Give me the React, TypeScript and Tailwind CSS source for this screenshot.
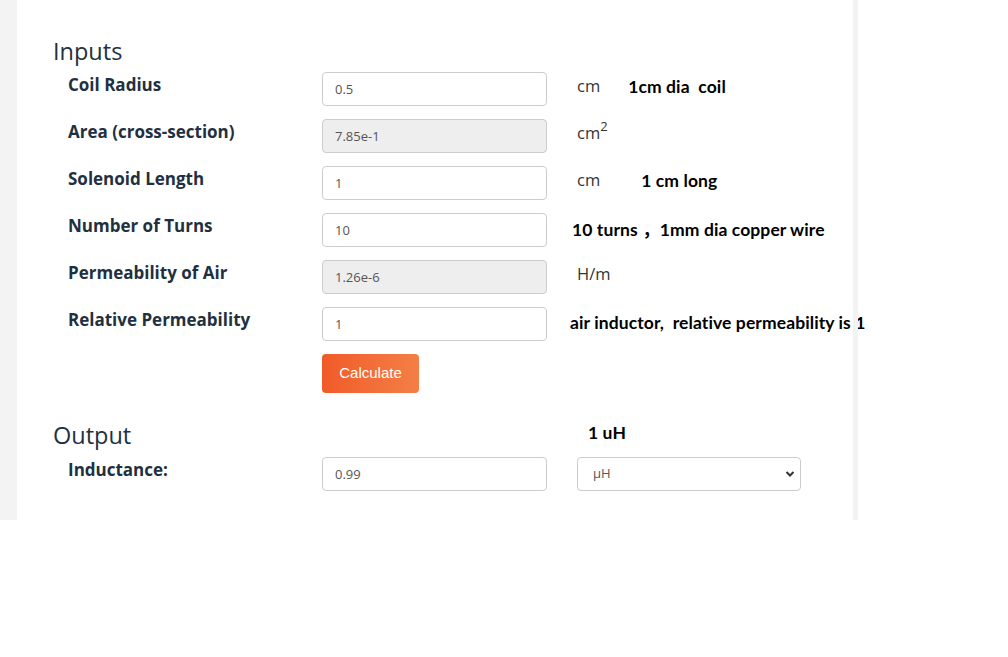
import React from "react";

const labelCls =
  "font-['Open_Sans',sans-serif] font-bold text-[17px] leading-[22px] text-[#1f3040] pl-[15px] pt-[2px]";
const inputCls =
  "w-[225px] h-[34px] rounded-[4px] border border-[#cccccc] px-[12px] text-[13px] text-[#555555] font-['Open_Sans',sans-serif] outline-none";
const unitCls =
  "font-['Open_Sans',sans-serif] text-[16.5px] leading-[22px] text-[#333333]";
const noteCls =
  "font-['Lato','Noto_Sans_CJK_SC',sans-serif] font-bold text-[17.5px] leading-[22px] text-black tracking-[0.1px]";

function Row({
  label,
  value,
  disabled,
  right,
}: {
  label: string;
  value: string;
  disabled?: boolean;
  right?: React.ReactNode;
}) {
  return (
    <div className="grid grid-cols-[269px_225px_1fr] items-start">
      <div className={labelCls}>{label}</div>
      <input
        className={inputCls + (disabled ? " bg-[#eeeeee]" : " bg-white")}
        defaultValue={value}
        disabled={disabled}
      />
      <div className="pl-[30px] pt-[3px] flex items-start whitespace-nowrap">{right}</div>
    </div>
  );
}

export default function App() {
  return (
    <div className="w-[1008px] h-[657px] bg-white">
      <div className="flex h-[520px]">
        <div className="w-[17px] bg-[#f3f3f3]" />
        <div className="w-[836px] bg-white pl-[36px] pt-[36px]">
          <h2 className="font-['Open_Sans',sans-serif] text-[23.5px] leading-[30px] text-[#22313f] mb-[6px]">
            Inputs
          </h2>
          <div className="flex flex-col gap-[13px]">
            <Row
              label="Coil Radius"
              value="0.5"
              right={
                <>
                  <span className={unitCls}>cm</span>
                  <span className={noteCls + " ml-[28px] mt-[1px]"}>1cm dia&nbsp; coil</span>
                </>
              }
            />
            <Row
              label="Area (cross-section)"
              value="7.85e-1"
              disabled
              right={
                <span className={unitCls}>
                  cm<sup className="text-[13px] relative top-[-8px]">2</sup>
                </span>
              }
            />
            <Row
              label="Solenoid Length"
              value="1"
              right={
                <>
                  <span className={unitCls}>cm</span>
                  <span className={noteCls + " ml-[41px] mt-[1px]"}>1 cm long</span>
                </>
              }
            />
            <Row
              label="Number of Turns"
              value="10"
              right={
                <span className={noteCls + " ml-[-5px] mt-[3px]"}>10 turns ，1mm dia copper wire</span>
              }
            />
            <Row
              label="Permeability of Air"
              value="1.26e-6"
              disabled
              right={<span className={unitCls}>H/m</span>}
            />
            <Row
              label="Relative Permeability"
              value="1"
              right={
                <span className={noteCls + " ml-[-7px] mt-[2px]"}>
                  air inductor,&nbsp; relative permeability is 1
                </span>
              }
            />
            <div className="grid grid-cols-[269px_225px_1fr]">
              <div />
              <div>
                <button className="h-[39px] w-[97px] rounded-[4px] bg-gradient-to-r from-[#f05a28] to-[#f47f46] text-white text-[15px] font-['Liberation_Sans',Arial,sans-serif]">
                  Calculate
                </button>
              </div>
            </div>
          </div>
          <div className="grid grid-cols-[494px_1fr] mt-[27px]">
            <h2 className="font-['Open_Sans',sans-serif] text-[23.5px] leading-[30px] text-[#22313f]">
              Output
            </h2>
            <div className="pl-[41px] pt-[1px]">
              <span className={noteCls}>1 uH</span>
            </div>
          </div>
          <div className="grid grid-cols-[269px_225px_1fr] items-start mt-[7px]">
            <div className={labelCls}>Inductance:</div>
            <input className={inputCls + " bg-white"} defaultValue="0.99" />
            <div className="pl-[30px]">
              <div className="relative w-[224px] h-[34px]">
                <select className="appearance-none w-full h-full rounded-[4px] border border-[#cccccc] bg-white pl-[15px] text-[13px] text-[#555555] font-['Open_Sans',sans-serif] outline-none">
                  <option>µH</option>
                </select>
                <svg
                  className="absolute right-[6px] top-[13px] pointer-events-none"
                  width="10"
                  height="8"
                  viewBox="0 0 10 8"
                >
                  <path d="M1.5 2 L5 5.5 L8.5 2" stroke="#333" strokeWidth="2" fill="none" />
                </svg>
              </div>
            </div>
          </div>
        </div>
        <div className="w-[5px] bg-[#f3f3f3]" />
      </div>
    </div>
  );
}
